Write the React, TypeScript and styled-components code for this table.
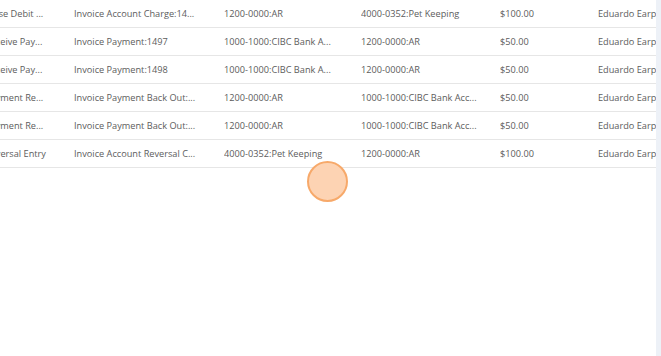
import styled, { createGlobalStyle } from 'styled-components';

interface Entry {
  type: string;
  description: string;
  debit: string;
  credit: string;
  amount: string;
  user: string;
}

const entries: Entry[] = [
  { type: 'Close Debit ...', description: 'Invoice Account Charge:14...', debit: '1200-0000:AR', credit: '4000-0352:Pet Keeping', amount: '$100.00', user: 'Eduardo Earp' },
  { type: 'Receive Pay...', description: 'Invoice Payment:1497', debit: '1000-1000:CIBC Bank A...', credit: '1200-0000:AR', amount: '$50.00', user: 'Eduardo Earp' },
  { type: 'Receive Pay...', description: 'Invoice Payment:1498', debit: '1000-1000:CIBC Bank A...', credit: '1200-0000:AR', amount: '$50.00', user: 'Eduardo Earp' },
  { type: 'Payment Re...', description: 'Invoice Payment Back Out:...', debit: '1200-0000:AR', credit: '1000-1000:CIBC Bank Acc...', amount: '$50.00', user: 'Eduardo Earp' },
  { type: 'Payment Re...', description: 'Invoice Payment Back Out:...', debit: '1200-0000:AR', credit: '1000-1000:CIBC Bank Acc...', amount: '$50.00', user: 'Eduardo Earp' },
  { type: 'Reversal Entry', description: 'Invoice Account Reversal C...', debit: '4000-0352:Pet Keeping', credit: '1200-0000:AR', amount: '$100.00', user: 'Eduardo Earp' },
];

const GlobalStyle = createGlobalStyle`
  html, body {
    margin: 0;
    padding: 0;
    background: #ffffff;
  }
  body {
    font-family: "Open Sans", "Liberation Sans", sans-serif;
  }
`;

const Page = styled.div`
  display: flex;
  width: 661px;
  height: 356px;
  overflow: hidden;
`;

const Viewport = styled.div`
  position: relative;
  flex: 1;
  overflow: hidden;
`;

const Scrollbar = styled.div`
  width: 5px;
  background: #edf1f7;
`;

/* table is scrolled horizontally, so the first column is partly hidden */
const Table = styled.div`
  display: flex;
  flex-direction: column;
  width: 760px;
  margin-left: -15px;
`;

const Row = styled.div`
  display: grid;
  grid-template-columns: 89px 150px 137px 139px 98px 145px;
  height: 27px;
  border-bottom: 1px solid #e6e6e6;
  align-items: center;
`;

const Cell = styled.div`
  font-size: 9.2px;
  color: #5c5c5c;
  white-space: nowrap;
  overflow: hidden;
`;

const Cursor = styled.div`
  position: absolute;
  left: 307px;
  top: 161px;
  width: 37px;
  height: 37px;
  border-radius: 50%;
  background: #fdd3b3;
  border: 2px solid #f7a96a;
`;

export default function App() {
  return (
    <Page>
      <GlobalStyle />
      <Viewport>
        <Table>
          {entries.map((e, i) => (
            <Row key={i}>
              <Cell>{e.type}</Cell>
              <Cell>{e.description}</Cell>
              <Cell>{e.debit}</Cell>
              <Cell>{e.credit}</Cell>
              <Cell>{e.amount}</Cell>
              <Cell>{e.user}</Cell>
            </Row>
          ))}
        </Table>
        <Cursor />
      </Viewport>
      <Scrollbar />
    </Page>
  );
}
